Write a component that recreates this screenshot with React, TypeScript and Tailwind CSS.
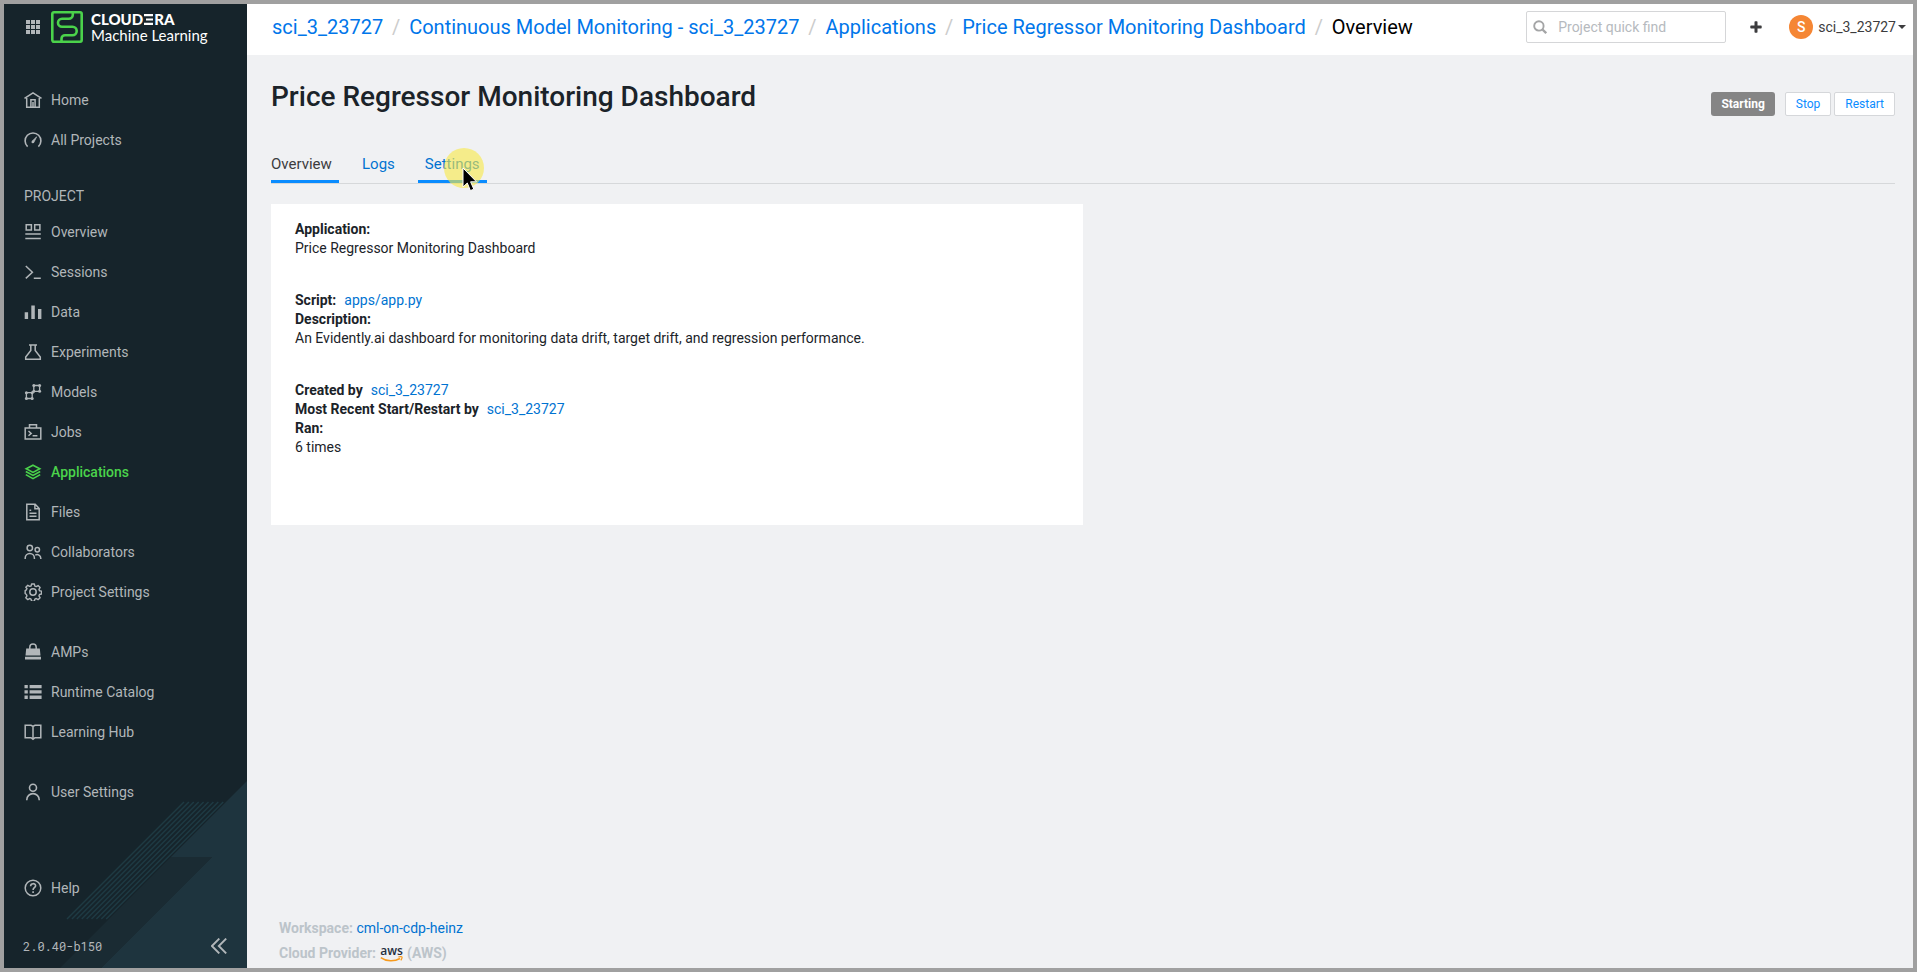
import type { ReactNode } from "react";

const stroke = { fill: "none", stroke: "currentColor", strokeWidth: 1.5 };

function Icon({ children }: { children: ReactNode }) {
  return (
    <svg viewBox="0 0 18 18" className="size-[18px] shrink-0" aria-hidden="true">
      {children}
    </svg>
  );
}

const icons: Record<string, ReactNode> = {
  home: (
    <g {...stroke}>
      <path d="M.5 7.4 9 1.8l8.500 5.600M2.700 7v9.300h4.200V8.800h4.200v7.500h4.200V7M9 11v5M2.700 16.300h12.600" />
    </g>
  ),
  gauge: (
    <g {...stroke} strokeWidth={1.6}>
      <path d="M3.600 15.600A7.900 7.900 0 1 1 14.400 15.600" />
      <path d="m8 10.300 4.600-4.400-2.900 5.700z" fill="currentColor" strokeWidth={0.8} />
      <circle cx="8.800" cy="11" r="1.300" fill="currentColor" stroke="none" />
    </g>
  ),
  overview: (
    <g {...stroke}>
      <path d="M2.200 1.700h5.200v5.200H2.200zM10.700 1.700h5.200v5.200h-5.200zM1.300 11h15.500M1.300 15.500h15.500" />
    </g>
  ),
  sessions: (
    <g {...stroke}>
      <path d="m1.800 3 6.600 6.200-6.600 6.200M9.800 15.300h7" />
    </g>
  ),
  data: <path fill="currentColor" d="M.7 9.300h3.400V16H.7zM7.300 2.500h3.500V16H7.300zM14 6h3.400v10H14z" />,
  experiments: (
    <g {...stroke}>
      <path d="M5 1.900h8M6.800 2v5.500L1.700 14v2.200h14.600V14l-5.100-6.500V2" />
    </g>
  ),
  models: (
    <g {...stroke} strokeWidth={1.3}>
      <path d="M9.800 2.500h5.800v5.800H9.800zM2.400 9.700h5.800v5.800H2.400zM8.200 9.700l1.600-1.400" />
      <g fill="currentColor" stroke="none">
        <circle cx="9.800" cy="2.500" r="1.500" />
        <circle cx="15.600" cy="2.500" r="1.500" />
        <circle cx="9.800" cy="8.300" r="1.500" />
        <circle cx="15.600" cy="8.300" r="1.500" />
        <circle cx="2.400" cy="9.700" r="1.500" />
        <circle cx="8.200" cy="9.700" r="1.500" />
        <circle cx="2.400" cy="15.500" r="1.500" />
        <circle cx="8.200" cy="15.500" r="1.500" />
      </g>
    </g>
  ),
  jobs: (
    <g {...stroke}>
      <path d="M1.200 5h15.600v11H1.200zM5.500 5V1.800h7V5M4.500 8l2.700 2.400-2.700 2.400M8.600 12.700h4.800" />
    </g>
  ),
  applications: (
    <g {...stroke} strokeWidth={1.6}>
      <path d="m9 2.200 6.800 3.600L9 9.400 2.200 5.800z" />
      <path d="M1.800 8.500 9 12.400l7.200-3.900M1.800 11.600 9 15.600l7.200-4" />
    </g>
  ),
  files: (
    <g {...stroke}>
      <path d="M2.800 1.200h8.400l4 4.300v11.300H2.800zM10.900 1.400v4.400h4.200M5.500 7.200h1.700M5.500 10.200h7M5.500 13.300h7" />
    </g>
  ),
  collaborators: (
    <g {...stroke} strokeWidth={1.5}>
      <circle cx="5.800" cy="5" r="2.700" />
      <circle cx="13.300" cy="6.800" r="2.200" />
      <path d="M1.200 16v-1a4.600 4.600 0 0 1 9.200 0v1M11.300 12.100a3.700 3.700 0 0 1 5.500 3.200v.7" />
    </g>
  ),
  settings: (
    <g {...stroke}>
      <path
        strokeLinejoin="round"
        d="M7.500 1h3l.5 2.100 1.500.600 1.900-1.100 2.100 2.100-1.200 1.800.600 1.500 2.100.500v3l-2.100.500-.600 1.500 1.200 1.800-2.100 2.100-1.900-1.200-1.500.600-.5 2.200h-3L7 16.800l-1.500-.600-1.900 1.200-2.100-2.100 1.200-1.800-.600-1.500L.8 11V8l1.300-.9.600-1.500-1.200-1.200 2.100-2.100 1.900 1.100L7 3.100z"
        transform="translate(.4 .1) scale(.95)"
      />
      <circle cx="9" cy="9" r="3.200" />
    </g>
  ),
  amps: (
    <g>
      <path {...stroke} d="M5.800 7V4.300a3.200 3.200 0 0 1 6.400 0V7" />
      <path fill="currentColor" d="M2.200 5.400h13.600l.7 7.200h-15zM1 13.700h16v2.900H1z" />
    </g>
  ),
  catalog: (
    <path
      fill="currentColor"
      d="M.5 2h3.300v3.300H.5zM5.600 2h12v3.300h-12zM.5 7.300h3.300v3.300H.5zM5.600 7.300h12v3.300h-12zM.5 12.600h3.300v3.300H.5zM5.600 12.600h12v3.300h-12z"
    />
  ),
  book: (
    <g {...stroke}>
      <path d="M1.200 2.300H7l2 1.200 2-1.200h5.800v12.400H11l-2 1.500-2-1.500H1.200zM9 3.500v12.600" />
    </g>
  ),
  user: (
    <g {...stroke} strokeWidth={1.600}>
      <circle cx="9" cy="4.800" r="3.500" />
      <path d="M2.800 17.300v-.5a6.200 6.200 0 0 1 12.400 0v.5" />
    </g>
  ),
  help: (
    <g {...stroke}>
      <circle cx="9" cy="9" r="7.800" />
      <path d="M6.600 7.200c0-3.400 5-3.200 5-.4 0 1.900-2.500 2-2.500 4.100M9.100 12.300v1.600" strokeWidth={1.600} />
    </g>
  ),
};

type Item = { icon: string; label: string; active?: boolean };

const topItems: Item[] = [
  { icon: "home", label: "Home" },
  { icon: "gauge", label: "All Projects" },
];

const projectItems: Item[] = [
  { icon: "overview", label: "Overview" },
  { icon: "sessions", label: "Sessions" },
  { icon: "data", label: "Data" },
  { icon: "experiments", label: "Experiments" },
  { icon: "models", label: "Models" },
  { icon: "jobs", label: "Jobs" },
  { icon: "applications", label: "Applications", active: true },
  { icon: "files", label: "Files" },
  { icon: "collaborators", label: "Collaborators" },
  { icon: "settings", label: "Project Settings" },
];

const resourceItems: Item[] = [
  { icon: "amps", label: "AMPs" },
  { icon: "catalog", label: "Runtime Catalog" },
  { icon: "book", label: "Learning Hub" },
];

function NavList({ items }: { items: Item[] }) {
  return (
    <ul>
      {items.map((item) => (
        <li key={item.label}>
          <a
            href="#"
            aria-current={item.active ? "page" : undefined}
            className={
              item.active
                ? "flex h-10 items-center gap-[9px] px-5 text-sm font-medium text-[#4bd34b]"
                : "flex h-10 items-center gap-[9px] px-5 text-sm text-[#b1b6b9]"
            }
          >
            <Icon>{icons[item.icon]}</Icon>
            {item.label}
          </a>
        </li>
      ))}
    </ul>
  );
}

function SidebarArt() {
  return (
    <svg viewBox="0 0 187 187" className="absolute right-0 bottom-0 size-[187px]" aria-hidden="true">
      <path fill="#1e343e" d="M187 0 111 76h41L41 187h146z" />
      <path fill="#1a2b33" d="M111 76h41L41 187H0z" />
      <g stroke="#1e3a43" strokeWidth="1.500">
        {[0, 1, 2, 3, 4, 5, 6, 7, 8].map((n) => (
          <path key={n} d={`M${124 + n * 4.900} 21 ${7 + n * 4.900} 138`} />
        ))}
      </g>
    </svg>
  );
}

function Sidebar() {
  return (
    <aside className="relative flex w-[243px] shrink-0 flex-col bg-[#16242b]">
      <SidebarArt />
      <div className="relative flex grow flex-col">
        <div className="flex h-[76px] items-start pt-[7px] pl-[22px]">
          <button type="button" aria-label="Open app switcher" className="mt-[9px] text-[#b1b6b9]">
            <svg viewBox="0 0 14 14" className="size-[14px]" fill="currentColor" aria-hidden="true">
              {[0, 5, 10].map((y) =>
                [0, 5, 10].map((x) => <rect key={`${x}-${y}`} x={x} y={y} width="4" height="4" />),
              )}
            </svg>
          </button>
          <a href="#" className="ml-[11px] flex gap-2 text-white">
            <svg
              viewBox="0 0 32 32"
              className="size-8"
              fill="none"
              stroke="#4bd34b"
              strokeWidth="2.600"
              aria-hidden="true"
            >
              <rect x="1.300" y="1.300" width="29.400" height="29.400" rx="1.600" />
              <path d="M21.800 1.500v2.300a4 4 0 0 1-4 4H11a4 4 0 0 0 0 8h10.500a4.200 4.200 0 0 1 0 8.400H14a3.500 3.500 0 0 0-3.500 3.500v3" />
            </svg>
            <span className="flex flex-col">
              <span className="flex h-4 items-center font-[Lato] text-[15px] leading-4 font-black" aria-label="CLOUDERA">
                CLOUD
                <svg viewBox="0 0 9 11" className="mx-px h-[11px] w-[9px]" fill="currentColor" aria-hidden="true">
                  <path d="M0 0h9v2.200H0zM2 4.400h7v2.200H2zM0 8.800h9V11H0z" />
                </svg>
                RA
              </span>
              <span className="font-[Lato] text-[15px] leading-4">Machine Learning</span>
            </span>
          </a>
        </div>
        <nav aria-label="Main" className="flex grow flex-col">
          <NavList items={topItems} />
          <h2 className="mt-5 flex h-8 items-center pl-5 text-sm text-[#b1b6b9]">PROJECT</h2>
          <NavList items={projectItems} />
          <div className="mt-5">
            <NavList items={resourceItems} />
          </div>
          <div className="mt-5">
            <NavList items={[{ icon: "user", label: "User Settings" }]} />
          </div>
          <div className="mt-auto">
            <NavList items={[{ icon: "help", label: "Help" }]} />
          </div>
        </nav>
        <div className="flex h-[60px] items-center justify-between pt-5 pr-5 pb-1 pl-[19px] text-[#b1b6b9]">
          <span className="font-['Roboto_Mono','DejaVu_Sans_Mono',monospace] text-[12px] leading-5">2.0.40-b150</span>
          <button type="button" aria-label="Collapse sidebar">
            <svg viewBox="0 0 16 16" className="size-4" fill="none" stroke="currentColor" strokeWidth="1.900" aria-hidden="true">
              <path d="M8.300.6.900 8l7.400 7.400M15.200.6 7.800 8l7.400 7.400" />
            </svg>
          </button>
        </div>
      </div>
    </aside>
  );
}

const crumbs = [
  "sci_3_23727",
  "Continuous Model Monitoring - sci_3_23727",
  "Applications",
  "Price Regressor Monitoring Dashboard",
];

function TopBar() {
  return (
    <header className="flex h-[51px] shrink-0 items-center justify-between bg-white pr-[7px] pb-[6px] pl-[25px]">
      <nav aria-label="Breadcrumb">
        <ol className="flex text-xl">
          {crumbs.map((crumb) => (
            <li key={crumb} className="flex">
              <a href="#" className="text-[#0076ea]">
                {crumb}
              </a>
              <span className="w-[26px] text-center text-[#cccccc]">/</span>
            </li>
          ))}
          <li aria-current="page" className="text-black">
            Overview
          </li>
        </ol>
      </nav>
      <div className="flex items-center">
        <label className="flex h-8 w-[200px] items-center gap-[11px] rounded-[2px] border border-[#d5d6d8] bg-white px-[6px]">
          <svg
            viewBox="0 0 14 14"
            className="size-[14px] shrink-0"
            fill="none"
            stroke="#a4a5a6"
            strokeWidth="1.900"
            aria-hidden="true"
          >
            <circle cx="5.900" cy="5.900" r="4.700" />
            <path d="m9.200 9.200 4 4" strokeWidth="2.300" />
          </svg>
          <input
            type="text"
            aria-label="Project quick find"
            placeholder="Project quick find"
            className="w-full min-w-0 bg-transparent text-sm outline-none placeholder:text-[#b6babe]"
          />
        </label>
        <button type="button" aria-label="Create new" className="ml-6 text-[#3c3c3e]">
          <svg viewBox="0 0 12 12" className="size-3" fill="currentColor" aria-hidden="true">
            <path d="M4.500 1q0-.7.7-.7h1.600q.7 0 .7.700v3.500H11q.7 0 .7.700v1.600q0 .7-.7.700H7.500V11q0 .7-.7.700H5.200q-.7 0-.7-.7V7.500H1q-.7 0-.7-.7V5.200q0-.7.700-.7h3.500z" />
          </svg>
        </button>
        <button type="button" className="ml-[27px] flex items-center text-sm text-[#3c3c3e]">
          <span className="mr-[5px] flex size-6 items-center justify-center rounded-full bg-[#f58634] font-medium text-white">
            S
          </span>
          sci_3_23727
          <svg viewBox="0 0 8 4" className="ml-[2px] h-1 w-2" fill="currentColor" aria-hidden="true">
            <path d="M0 0h8L4 4z" />
          </svg>
        </button>
      </div>
    </header>
  );
}

function AwsLogo() {
  return (
    <span className="inline-flex w-[23px] flex-col items-center" role="img" aria-label="aws">
      <span className="font-['Open_Sans'] text-[12px] leading-[10px] font-semibold text-[#252f3e]">aws</span>
      <svg viewBox="0 0 23 6" className="h-[6px] w-[23px]" fill="none" stroke="#f79a1c" aria-hidden="true">
        <path d="M.8 1.600C6.500 5.800 14.500 5.800 20 2.500" strokeWidth="1.500" />
        <path d="M18.300 1c1.700-.5 3.200-.5 3.600-.1.300.5-.2 2.200-1.100 3.500" strokeWidth="1.200" />
      </svg>
    </span>
  );
}

function Cursor() {
  return (
    <span className="pointer-events-none absolute top-0 left-[26px] size-10 rounded-full bg-[#f8ea45]/60">
      <svg viewBox="0 0 16 25" className="absolute top-[19px] left-[18px] h-[25px] w-4" aria-hidden="true">
        <path
          d="M1 1v19l4.300-4 3.100 7.600 3.400-1.400-3.200-7.400h5.900z"
          fill="#000"
          stroke="#fff"
          strokeWidth="1"
          strokeLinejoin="round"
        />
      </svg>
    </span>
  );
}

function Tabs() {
  return (
    <nav aria-label="Application" className="mt-[31px] flex h-9 border-b border-[#d6d8da] text-[15px]">
      <a
        href="#"
        aria-current="page"
        className="flex w-[68px] items-center border-b-[3px] border-[#0a8cff] text-[#3c3c3e]"
      >
        Overview
      </a>
      <a href="#" className="ml-[23px] flex items-center border-b-[3px] border-transparent text-[#0073d1]">
        Logs
      </a>
      <a
        href="#"
        className="relative ml-[23px] flex w-[69px] items-center border-b-[3px] border-[#0a8cff] pl-[7px] text-[#0073d1]"
      >
        Settings
        <Cursor />
      </a>
    </nav>
  );
}

function Details() {
  return (
    <section className="mt-5 w-1/2 bg-white px-6 pt-4 pb-[68px] text-sm leading-[19px] text-[#1b2329]">
      <dl>
        <dt className="font-bold">Application:</dt>
        <dd>Price Regressor Monitoring Dashboard</dd>
        <div className="mt-[33px] flex gap-2">
          <dt className="font-bold">Script:</dt>
          <dd>
            <a href="#" className="text-[#0073d1]">
              apps/app.py
            </a>
          </dd>
        </div>
        <dt className="font-bold">Description:</dt>
        <dd>An Evidently.ai dashboard for monitoring data drift, target drift, and regression performance.</dd>
        <div className="mt-[33px] flex gap-2">
          <dt className="font-bold">Created by</dt>
          <dd>
            <a href="#" className="text-[#0073d1]">
              sci_3_23727
            </a>
          </dd>
        </div>
        <div className="flex gap-2">
          <dt className="font-bold">Most Recent Start/Restart by</dt>
          <dd>
            <a href="#" className="text-[#0073d1]">
              sci_3_23727
            </a>
          </dd>
        </div>
        <dt className="font-bold">Ran:</dt>
        <dd>6 times</dd>
      </dl>
    </section>
  );
}

export default function App() {
  return (
    <div className="flex min-h-screen border-4 border-[#a0a0a0] bg-[#f0f1f3] font-[Roboto,sans-serif]">
      <Sidebar />
      <div className="flex min-w-0 grow flex-col">
        <TopBar />
        <main className="flex grow flex-col pr-[18px] pl-6">
          <div className="flex items-start justify-between pt-[22px]">
            <h1 className="text-[28px] leading-10 font-medium text-[#1b2329]">Price Regressor Monitoring Dashboard</h1>
            <div className="mt-[15px] flex text-[12px]">
              <span className="flex h-6 items-center rounded-[3px] bg-[#858585] px-[10px] font-bold text-white">
                Starting
              </span>
              <button
                type="button"
                className="ml-[10px] h-6 rounded-[2px] border border-[#d5d7da] bg-white px-[10px] text-[#0a8cff]"
              >
                Stop
              </button>
              <button
                type="button"
                className="ml-[3px] h-6 rounded-[2px] border border-[#d5d7da] bg-white px-[10px] text-[#0a8cff]"
              >
                Restart
              </button>
            </div>
          </div>
          <Tabs />
          <Details />
          <footer className="mt-auto flex flex-col pb-[2px] pl-2 text-sm leading-[25px] font-bold text-[#bcc4ca]">
            <div>
              Workspace:{" "}
              <a href="#" className="font-normal text-[#0073d1]">
                cml-on-cdp-heinz
              </a>
            </div>
            <div className="flex items-center gap-1">
              Cloud Provider: <AwsLogo /> (AWS)
            </div>
          </footer>
        </main>
      </div>
    </div>
  );
}
